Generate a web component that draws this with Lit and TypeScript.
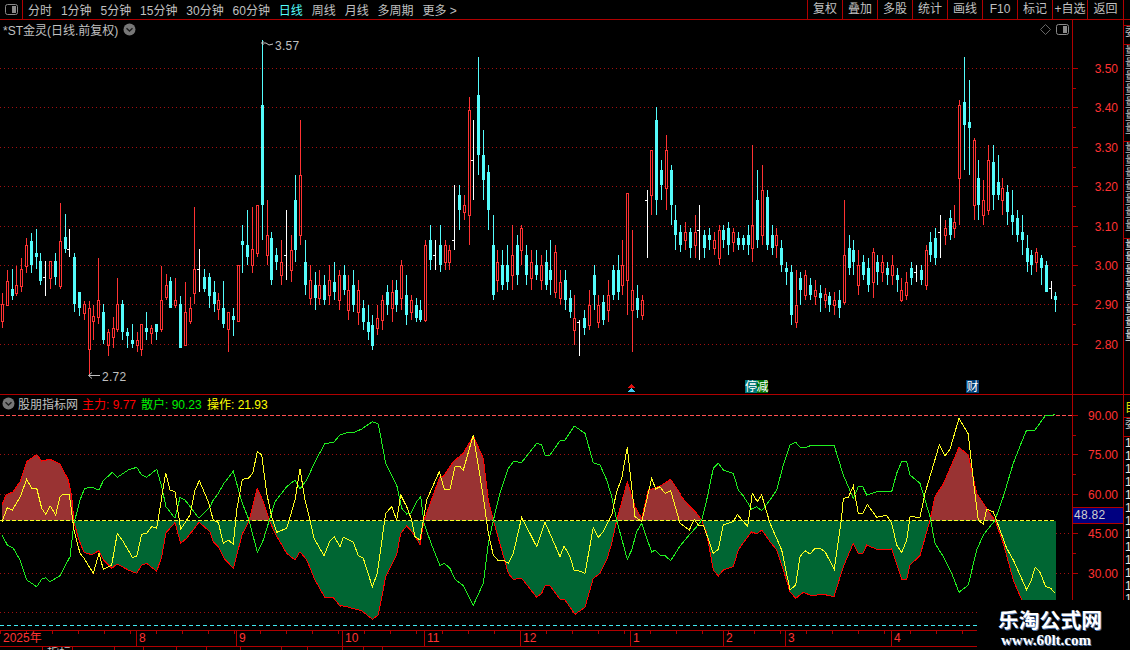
import { css, html, svg, LitElement } from 'lit';
import { customElement } from 'lit/decorators.js';

// kind, high, body top, body bottom, low (page pixels)
const CANDLES = `R293,304,321,328 R270,281,305,305 C269,289,296,300 R266,285,293,296 R258,269,286,292 R238,245,266,273
C233,241,265,273 C229,253,257,269 C253,261,281,285 W261,277,278,296 R261,261,278,289 C253,261,277,285 R203,241,286,289
C214,237,249,253 W229,249,250,257 C253,257,304,312 C292,292,308,316 R301,304,313,320 R301,308,349,375 R305,316,321,340
R258,300,317,324 C304,312,340,344 R329,332,345,356 R317,328,337,348 R278,304,329,332 C300,304,332,340 C328,332,336,348
C324,340,344,348 R332,340,345,352 R324,324,349,356 C312,328,332,340 R325,328,333,344 C324,324,332,340 R266,300,329,332
R274,285,297,300 C277,281,308,308 R278,300,305,308 C296,304,348,348 R282,312,345,345 R297,308,321,324 R207,269,293,304
W249,269,270,292 C269,277,289,292 C273,277,296,308 C281,292,304,312 R293,300,309,320 C281,308,324,328 R312,312,329,352
C308,316,320,336 R265,265,321,321 C225,241,245,273 C210,245,257,265 R207,249,265,273 R205,205,253,257
C40,105,205,240 R200,235,255,265 C232,238,280,285 C248,255,262,270 R240,262,275,285 W210,255,256,280 R235,250,270,282
C175,200,250,262 R120,175,235,245 C240,262,285,295 R265,280,298,305 C272,285,298,310 R270,285,298,305 C275,285,300,305
R265,280,295,305 C262,282,292,300 R270,275,300,310 C265,275,290,295 R275,290,310,320 C270,285,305,312 R280,290,312,325
C300,308,322,330 C305,322,332,340 C315,325,346,350 R305,318,328,335 R295,300,320,330 C285,292,305,315 R280,292,308,322
C280,290,305,312 R260,265,298,310 C275,295,315,325 R295,300,312,320 C298,305,318,322 C300,310,320,322 R240,245,320,322
C225,240,260,270 W240,255,256,270 C225,245,265,272 R240,245,262,270 R245,250,262,270 W185,240,241,250 C185,195,210,230
R195,205,212,220 R97,110,215,245 W120,160,161,200 C57,95,155,175 C130,155,180,200 C165,172,210,230 C215,245,295,300
R250,262,280,292 C250,265,285,290 C245,265,282,290 R225,255,275,290 C235,245,275,285 R225,228,250,265 C245,255,275,285
R250,262,278,290 C250,265,275,280 R255,265,280,290 C250,262,285,290 C240,270,280,295 R245,252,292,298 R270,282,298,305
C270,280,300,310 C290,298,312,318 R295,318,330,345 W320,322,323,356 C310,318,328,335 R290,305,325,330 C265,275,295,310
R295,305,322,328 C295,302,320,325 R280,295,310,322 C265,270,295,300 C255,270,292,300 R240,265,285,295 R193,193,280,315
R230,290,310,352 C285,298,310,318 R295,300,315,320 W190,200,201,258 R150,150,195,215 C107,120,200,215 C160,170,185,200
R135,150,188,210 C165,170,205,225 C205,220,235,250 C225,232,245,252 R222,232,240,250 C228,232,248,258 R215,232,245,258
W205,230,231,260 C230,235,248,258 C228,235,240,250 R232,240,248,255 R225,230,258,265 C225,230,240,248 C222,228,245,255
R228,232,242,252 C232,238,245,250 C235,238,245,250 C225,235,245,255 R145,225,248,262 C170,200,240,248 R165,190,235,245
C190,197,245,250 C225,235,248,255 R228,235,245,258 C240,248,265,272 C262,268,272,285 C265,272,315,325 R270,305,322,328
C272,278,290,305 R270,275,295,300 C278,285,295,300 R280,290,296,305 C285,293,298,312 R288,294,300,308 C292,296,305,312
R292,300,305,315 C290,300,308,318 R200,255,302,305 C235,248,268,275 C240,250,262,275 R250,265,285,295 C255,262,275,280
C258,268,285,292 R248,252,282,298 C255,262,272,285 R255,262,272,282 C262,268,275,285 R255,265,275,285 C268,275,280,292
R278,290,300,302 R272,282,295,300 C262,268,278,285 W265,272,273,282 C265,270,280,285 R245,250,285,290 C232,242,255,262
C228,238,258,265 W215,232,233,258 R220,228,235,245 C210,218,235,240 R205,222,228,238 R100,105,178,225 C57,102,125,170
C80,122,128,175 R138,140,205,220 C160,178,205,220 R180,200,215,225 R145,160,210,215 C145,162,195,210 C155,182,195,200
R178,188,200,215 C185,192,212,225 C190,215,222,235 C210,218,235,242 C215,232,240,255 C235,248,262,272 C250,255,265,275
R248,252,262,272 C255,258,268,285 C261,265,292,292 W281,288,289,299 C292,296,300,312`
  .trim().split(/\s+/);

// indicator lines, traced in three stretches: [left edge, x, y, x, y ...] at 3x, y from 410
const MAIN = [
  [0, 6,285,18,255,40,245,60,215,80,155,110,133,125,153,150,148,180,162,205,210,215,260,222,335,235,385,252,427,275,434,297,422,310,450,335,475,352,462,385,480,410,490,425,465,440,460,470,484,485,440,498,368,525,338,542,400,560,385,597,337,630,365,640,395,655,410,672,445,700,475,727,372,747,333,772,235,790,275,808,331,825,370,860,430,885,450,900,425,920,450,945,510,975,563,1000,563,1020,588],
  [340, 0,586,20,590,45,597,65,602,97,628,115,615,137,500,170,435,182,370,200,348,220,370,240,404,252,331,300,200,310,200,340,155,370,130,400,78,430,145,445,270,460,331,485,420,505,490,520,508,545,505,590,562,605,550,615,527,630,527,660,568,675,570,705,613,735,592,760,505,780,490,800,450,815,400,830,331,862,215,885,290,905,325,925,240,945,235,965,225,992,208,1020,250],
  [680, 0,255,30,290,50,310,65,331,80,370,100,480,115,498,130,480,160,470,175,420,190,398,215,365,230,372,245,360,270,395,290,420,310,480,330,545,347,565,370,547,395,557,430,553,462,560,490,470,520,400,535,430,548,432,560,405,590,418,635,417,665,508,680,508,690,465,720,437,750,331,765,260,790,222,837,112,865,135,890,250,930,310,945,331,970,400,1000,510,1025,570],
];
const RETAIL = [
  [0, 6,375,22,405,40,415,60,450,80,510,110,530,125,508,137,503,150,515,180,497,210,440,222,340,240,270,254,235,275,232,297,240,310,212,337,187,352,202,385,180,410,172,425,195,440,202,470,178,485,230,498,290,525,325,540,262,555,270,597,325,630,290,640,270,655,250,672,220,700,184,727,280,747,330,772,427,790,390,808,331,825,275,860,230,885,210,900,237,920,210,945,155,975,100,1000,98,1020,75],
  [340, 20,68,45,66,65,57,97,35,115,42,137,160,170,225,185,295,200,312,212,310,230,275,242,260,252,340,275,405,300,467,313,460,330,475,345,508,370,527,400,586,430,520,445,400,460,331,480,250,505,175,520,155,545,157,590,100,605,105,615,135,630,135,660,92,675,90,703,48,735,70,760,158,780,165,800,210,815,260,830,331,862,448,875,420,890,365,905,340,935,427,945,420,960,435,975,437,992,452,1020,408],
  [680, 30,372,50,350,65,331,80,270,100,175,115,160,130,180,160,190,175,240,190,258,215,297,230,290,245,302,270,270,290,240,310,165,330,105,347,97,360,112,380,112,395,105,462,105,490,195,520,265,535,230,548,230,560,255,590,245,635,245,650,190,665,155,680,155,690,195,720,220,750,320,765,400,790,440,815,490,837,547,865,525,890,420,910,375,945,331,970,260,1000,160,1025,95,1040,60,1065,60,1095,18,1125,14],
];
const OPERATE = [
  [0, 6,335,22,293,37,300,60,262,80,208,95,235,110,235,125,295,137,313,150,287,167,315,180,260,190,253,208,253,222,360,240,430,252,445,280,490,297,430,310,478,335,465,352,370,370,395,397,442,410,440,425,373,440,370,455,350,470,355,497,188,510,240,525,245,542,358,570,315,585,240,598,212,625,275,640,331,655,337,670,400,685,390,700,403,710,300,727,208,745,205,758,190,772,125,785,135,800,250,815,320,830,367,860,355,885,270,900,177,915,270,930,330,942,385,972,437,990,392,1003,380,1020,410],
  [340, 10,382,40,397,55,437,70,445,97,530,112,490,137,310,155,290,170,330,182,255,200,290,215,330,225,380,240,390,260,270,298,185,313,238,330,238,345,170,360,170,370,180,400,75,430,260,445,370,460,435,475,452,490,450,505,460,520,430,545,322,590,410,615,337,660,440,672,408,690,440,703,483,715,482,735,490,760,352,775,382,790,365,815,315,830,245,845,205,862,112,885,320,905,335,935,205,947,237,960,230,975,250,992,242,1020,340],
  [680, 28,360,43,328,55,345,70,345,100,430,115,418,130,345,160,335,172,313,203,350,217,250,232,275,245,255,270,340,305,420,330,540,347,525,360,440,375,422,390,432,405,415,420,415,435,425,463,478,485,320,490,265,505,262,520,228,535,310,548,312,562,283,590,322,620,316,635,340,650,405,665,428,680,390,690,320,720,322,735,250,778,105,795,138,810,118,837,25,865,72,880,210,895,330,910,343,920,298,940,305,960,360,980,415,1000,450,1040,540,1052,515,1066,472,1080,487,1097,530,1112,535,1125,550],
];

const PRICE_TICKS = [['3.50', 68], ['3.40', 107], ['3.30', 147], ['3.20', 186], ['3.10', 226], ['3.00', 265], ['2.90', 304], ['2.80', 344]] as const;
const INDICATOR_TICKS = [['90.00', 415], ['75.00', 454], ['60.00', 494], ['45.00', 533], ['30.00', 573]] as const;
const PERIODS = ['分时', '1分钟', '5分钟', '15分钟', '30分钟', '60分钟', '日线', '周线', '月线', '多周期'];
const TOOLS = ['复权', '叠加', '多股', '统计', '画线', 'F10', '标记', '+自选', '返回'];
const MONTHS = [['2025年', 136], ['8', 100], ['9', 106], ['10', 82], ['11', 96], ['12', 110], ['1', 93], ['2', 62], ['3', 106], ['4', 86]] as const;
const TABS = [['', 43], ['指标', 30], ['', 42], ['', 29], ['', 33], ['', 30], ['', 34], ['', 41], ['', 26], ['', 35], ['', 21], ['', 19]] as const;

const trace = (stretches: number[][]) =>
  stretches.flatMap(([x0, ...pts]) => {
    const out: [number, number][] = [];
    for (let i = 0; i < pts.length; i += 2) out.push([+(x0 + pts[i] / 3).toFixed(1), +(410 + pts[i + 1] / 3).toFixed(1)]);
    return out;
  });

const toPoints = (pts: [number, number][]) => pts.map(p => p.join(',')).join(' ');
const box = (x: number, y: number, w: number, h: number) => (h > 0 ? `M${x} ${y}h${w}v${h}h${-w}z` : '');

function candlePaths() {
  const paths: Record<string, string> = { R: '', C: '', W: '' };
  CANDLES.forEach((row, i) => {
    const kind = row[0];
    const [hi, top, bot, lo] = row.slice(1).split(',').map(Number);
    const x = Math.round(2 + 4.81 * i);
    let d = box(x, hi, 1, top - hi) + box(x, bot, 1, lo - bot);
    if (kind === 'R') {
      d += box(x - 1, top, 3, 1) + box(x - 1, bot, 3, 1) + box(x - 1, top, 1, bot - top) + box(x + 1, top, 1, bot - top);
    } else if (kind === 'C') {
      d += box(x - 1, top, 3, bot - top);
    } else {
      d += box(x - 2, top, 3, 1) + box(x, top, 1, bot - top);
    }
    paths[kind] += d;
  });
  return paths;
}

// one dot every 4px, drawn as a pattern so the dots stay a single pixel
const dottedRow = (y: number) => svg`<rect x="0" y=${y} width="1072" height="1" fill="url(#dots)"></rect>`;
const dotsPattern = svg`<pattern id="dots" width="4" height="1" patternUnits="userSpaceOnUse"><rect width="1" height="1" fill="#a01010"></rect></pattern>`;

const chevronBadge = html`<svg class="badge" viewBox="0 0 13 13" width="13" height="13">
  <circle cx="6.5" cy="6.5" r="6" fill="#777"></circle>
  <path d="M3.5 5.2 6.5 8 9.5 5.2" fill="none" stroke="#1c1c1c" stroke-width="1.4"></path>
</svg>`;

@customElement('app-root')
export class AppRoot extends LitElement {
  static styles = css`
    :host {
      display: block;
      position: relative;
      width: 1130px;
      height: 650px;
      overflow: hidden;
      background: #000;
      color: #c0c0c0;
      font: 12px "Liberation Sans", "Noto Sans CJK SC", sans-serif;
    }

    svg {
      display: block;
    }

    svg text {
      font: 12px "Liberation Sans", "Noto Sans CJK SC", sans-serif;
    }

    .toolbar {
      display: flex;
      align-items: center;
      height: 19px;
      border-bottom: 1px solid #b00000;
      white-space: nowrap;
    }

    .layout-btn {
      display: flex;
      align-items: center;
      justify-content: center;
      width: 23px;
      height: 19px;
      box-sizing: border-box;
      border-right: 1px solid #b00000;
      margin-right: 5px;
    }

    .periods {
      display: flex;
      gap: 8.9px;
    }

    .periods .active {
      color: #54fcfc;
    }

    .tools {
      display: flex;
      margin-left: auto;
      padding-right: 6px;
    }

    .tools span {
      box-sizing: border-box;
      width: 35px;
      height: 19px;
      line-height: 18px;
      text-align: center;
      border-left: 1px solid #b00000;
    }

    .tools span:last-child {
      width: 37px;
      border-right: 1px solid #b00000;
    }

    .pane {
      display: flex;
    }

    .price {
      height: 374px;
      border-bottom: 1px solid #b00000;
    }

    .indicator {
      height: 235px;
      border-bottom: 1px solid #b00000;
    }

    .plot {
      position: relative;
      width: 1072px;
    }

    .axis {
      position: relative;
      width: 50px;
      border-left: 1px solid #b00000;
    }

    .last-value {
      position: absolute;
      left: 0;
      top: 112px;
      box-sizing: border-box;
      width: 50px;
      height: 17px;
      padding-left: 1px;
      line-height: 15px;
      background: #000080;
      border-top: 1px solid #b00000;
      border-bottom: 1px solid #b00000;
      color: #d0d0d0;
      letter-spacing: 0.3px;
    }

    .strip {
      width: 6px;
      overflow: hidden;
      border-left: 1px solid #b00000;
      line-height: 13px;
      white-space: nowrap;
    }

    .strip div {
      box-sizing: border-box;
      overflow: hidden;
      padding-left: 1px;
      border-bottom: 1px solid #b00000;
    }

    .strip .gap {
      height: 6px;
    }

    .strip .label {
      height: 19px;
    }

    .strip .block {
      height: 97px;
    }

    .strip .rest {
      height: 150px;
      border-bottom: none;
      color: #e8e8e8;
    }

    .strip .yellow {
      height: 23px;
      padding-top: 7px;
      color: #e0e000;
    }

    .strip .digits {
      height: 194px;
      border-bottom: none;
      color: #e8e8e8;
    }

    .chart-title {
      position: absolute;
      left: 3px;
      top: 2px;
      display: flex;
      align-items: center;
      gap: 5px;
      height: 14px;
    }

    .chart-icons {
      position: absolute;
      right: 3px;
      top: 4px;
      display: flex;
      align-items: center;
      gap: 5px;
    }

    .legend {
      position: absolute;
      left: 2px;
      top: 1px;
      display: flex;
      align-items: center;
      height: 14px;
    }

    .legend .name {
      margin: 0 4px 0 3px;
    }

    .legend .main {
      color: #ff0000;
      width: 59px;
    }

    .legend .retail {
      color: #00f000;
      width: 66px;
    }

    .legend .operate {
      color: #ffff00;
    }

    .dates {
      display: flex;
      height: 15px;
      width: 1130px;
      border-bottom: 1px solid #b00000;
      color: #ff3232;
      line-height: 15px;
      background: repeating-linear-gradient(90deg, #b00000 0 1px, transparent 1px 26px) 0 0 / 100% 3px no-repeat;
    }

    .dates span {
      box-sizing: border-box;
      padding-left: 2px;
      border-left: 1px solid #b00000;
    }

    .dates span:first-child {
      padding-left: 3px;
      border-left: none;
    }

    .tabs {
      display: flex;
      height: 3px;
      overflow: hidden;
      line-height: 13px;
    }

    .tabs span {
      box-sizing: border-box;
      padding-left: 4px;
      border-right: 1px solid #b00000;
    }

    .stamp {
      position: absolute;
      left: 977px;
      top: 600px;
      width: 153px;
      height: 50px;
      background: #000;
      color: #fff;
    }

    .stamp .cn {
      position: absolute;
      left: 21px;
      top: 7px;
      font: 700 20.8px/24px "Noto Sans CJK SC", serif;
      text-shadow: 1px 1px 0 #4a6ea8;
    }

    .stamp .en {
      position: absolute;
      left: 24px;
      top: 32px;
      font: 700 15px/17px "Liberation Serif", serif;
      text-shadow: 1px 1px 0 #4a6ea8;
    }
  `;

  private axisTicks(ticks: readonly (readonly [string, number])[], top: number, h: number) {
    return svg`<svg width="50" height=${h} viewBox="1073 ${top} 50 ${h}" shape-rendering="crispEdges">
      ${ticks.map(([label, y], i) => svg`
        <rect x="1073" y=${y} width="5" height="1" fill="#b00000"></rect>
        ${i < ticks.length - 1 ? svg`<rect x="1073" y=${Math.round((y + ticks[i + 1][1]) / 2)} width="3" height="1" fill="#b00000"></rect>` : ''}
        <text x="1118" y=${y + 5} text-anchor="end" fill="#ff3232">${label}</text>`)}
    </svg>`;
  }

  private priceSvg() {
    const c = candlePaths();
    return html`<svg width="1072" height="374" viewBox="0 20 1072 374">
      <defs>${dotsPattern}</defs>
      <g shape-rendering="crispEdges">
        ${PRICE_TICKS.map(([, y]) => dottedRow(y))}
        <path d=${c.R} fill="#ff3232"></path>
        <path d=${c.C} fill="#54fcfc"></path>
        <path d=${c.W} fill="#ffffff"></path>
        <polygon points="631,384 635,388 627,388" fill="#e01010"></polygon>
        <polygon points="631,388 635,392 627,392" fill="#40c8f0"></polygon>
        <rect x="745" y="380" width="12" height="13" fill="#007878"></rect>
        <rect x="757" y="380" width="11" height="13" fill="#007000"></rect>
        <rect x="966" y="380" width="13" height="13" fill="#004078"></rect>
      </g>
      <text x="745" y="391" fill="#fff">停</text>
      <text x="756.5" y="391" fill="#fff">减</text>
      <text x="966.5" y="391" fill="#fff">财</text>
      <path d="M263.5 41 261.5 43 263.5 45M262 43h4l3 2 4-1" fill="none" stroke="#c8c8c8"></path>
      <text x="275" y="50" fill="#c0c0c0" letter-spacing="0.3">3.57</text>
      <path d="M92 372.5 88.5 375.5 92 378.5M89 375.5h11" fill="none" stroke="#c0c0c0"></path>
      <text x="102" y="381" fill="#c0c0c0" letter-spacing="0.3">2.72</text>
    </svg>`;
  }

  private indicatorSvg() {
    const main = trace(MAIN);
    const area = toPoints([[2, 520.5], ...main, [1056, 600], [1056, 520.5]]);
    return html`<svg width="1072" height="235" viewBox="0 395 1072 235">
      <defs>
        ${dotsPattern}
        <clipPath id="above"><rect x="0" y="395" width="1072" height="125.5"></rect></clipPath>
        <clipPath id="below"><rect x="0" y="520.5" width="1072" height="110"></rect></clipPath>
      </defs>
      <g shape-rendering="crispEdges" fill="none">
        ${[454, 494, 533, 573, 612].map(dottedRow)}
        <line x1="0" x2="1072" y1="415.5" y2="415.5" stroke="#ff5050" stroke-dasharray="4 2"></line>
        <line x1="0" x2="1072" y1="625.5" y2="625.5" stroke="#40e8f0" stroke-dasharray="4 3"></line>
        <polygon points=${area} fill="#993333" clip-path="url(#above)"></polygon>
        <polygon points=${area} fill="#006633" clip-path="url(#below)"></polygon>
        <polyline points=${toPoints(main)} stroke="#ff0000"></polyline>
        <line x1="0" x2="1056" y1="520.5" y2="520.5" stroke="#ffff20" stroke-dasharray="4 2"></line>
        <polyline points=${toPoints(trace(RETAIL))} stroke="#20f020"></polyline>
        <polyline points=${toPoints(trace(OPERATE))} stroke="#ffff20"></polyline>
      </g>
    </svg>`;
  }

  render() {
    return html`
      <div class="toolbar">
        <div class="layout-btn">
          <svg width="13" height="11" viewBox="0 0 13 11">
            <rect x="0.5" y="0.5" width="12" height="10" rx="2" fill="none" stroke="#8a8a8a"></rect>
            <rect x="7" y="2" width="4" height="7" fill="#8a8a8a"></rect>
          </svg>
        </div>
        <div class="periods">
          ${PERIODS.map(p => html`<span class=${p === '日线' ? 'active' : ''}>${p}</span>`)}
          <span>更多 &gt;</span>
        </div>
        <div class="tools">${TOOLS.map(t => html`<span>${t}</span>`)}</div>
      </div>

      <div class="pane price">
        <div class="plot">
          ${this.priceSvg()}
          <div class="chart-title"><span>*ST金灵(日线.前复权)</span>${chevronBadge}</div>
          <div class="chart-icons">
            <svg width="11" height="11" viewBox="0 0 11 11"><path d="M5.5 .5 10.5 5.5 5.5 10.5 .5 5.5z" fill="none" stroke="#666"></path></svg>
            <svg width="13" height="11" viewBox="0 0 13 11">
              <rect x="0.5" y="0.5" width="12" height="10" rx="2" fill="none" stroke="#8a8a8a"></rect>
              <rect x="7" y="2" width="4" height="7" fill="#8a8a8a"></rect>
            </svg>
          </div>
        </div>
        <div class="axis">${this.axisTicks(PRICE_TICKS, 20, 374)}</div>
        <div class="strip">
          <div class="gap"></div>
          <div class="label">委</div>
          <div class="block">量量<br />量量<br />量量<br />量量<br />量量<br />量量<br />量量</div>
          <div class="block">量量<br />量量<br />量量<br />量量<br />量量<br />量量<br />量量</div>
          <div class="rest">量<br />量<br />量<br />量<br />量<br />量<br />量<br />量</div>
        </div>
      </div>

      <div class="pane indicator">
        <div class="plot">
          ${this.indicatorSvg()}
          <div class="legend">
            ${chevronBadge}
            <span class="name">股朋指标网</span>
            <span class="main">主力: 9.77</span>
            <span class="retail">散户: 90.23</span>
            <span class="operate">操作: 21.93</span>
          </div>
        </div>
        <div class="axis">
          ${this.axisTicks(INDICATOR_TICKS, 395, 235)}
          <div class="last-value">48.82</div>
        </div>
        <div class="strip">
          <div class="yellow">目</div>
          <div class="label">委</div>
          <div class="digits">1<br />1<br />1<br />1<br />1<br />1<br />1<br />1<br />1<br />1<br />1<br />1<br />1<br />1</div>
        </div>
      </div>

      <div class="dates">
        ${MONTHS.map(([m, w]) => html`<span style="width:${w}px">${m}</span>`)}
      </div>
      <div class="tabs">
        ${TABS.map(([t, w]) => html`<span style="width:${w}px">${t}</span>`)}
      </div>

      <div class="stamp">
        <div class="cn">乐淘公式网</div>
        <div class="en">www.60lt.com</div>
      </div>
    `;
  }
}
